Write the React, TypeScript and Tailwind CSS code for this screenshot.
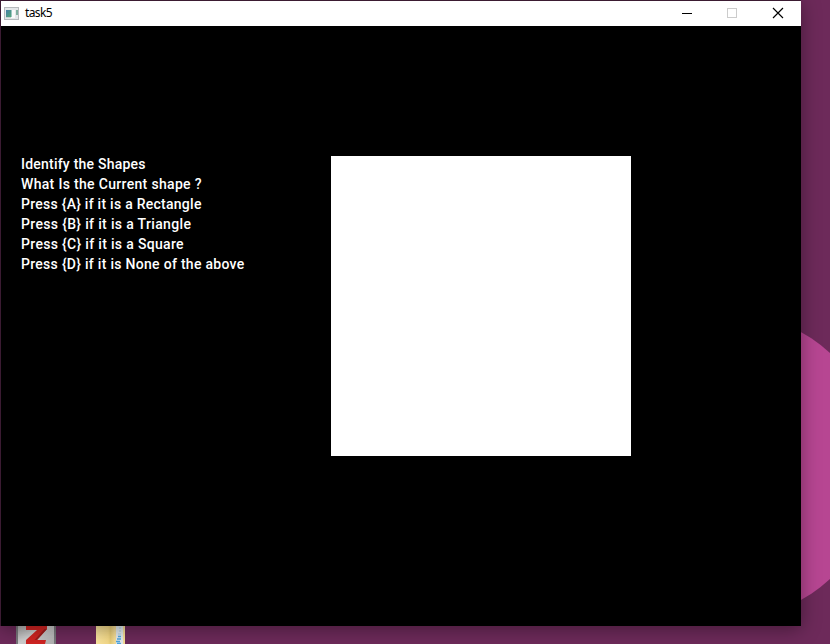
const lines = [
  { text: "Identify the Shapes", tracking: "tracking-[0.22px]" },
  { text: "What Is the Current shape ?", tracking: "tracking-[0.32px]" },
  { text: "Press {A} if it is a Rectangle", tracking: "tracking-[0.26px]" },
  { text: "Press {B} if it is a Triangle", tracking: "tracking-[0.34px]" },
  { text: "Press {C} if it is a Square", tracking: "tracking-[0.33px]" },
  { text: "Press {D} if it is None of the above", tracking: "tracking-[0.29px]" },
];

function Wallpaper() {
  return (
    <svg className="absolute inset-0" width="830" height="644" viewBox="0 0 830 644">
      <circle cx="726" cy="466" r="153.6" fill="#b74692" />
    </svg>
  );
}

function DesktopIcons() {
  return (
    <svg className="absolute left-0 top-[620px]" width="150" height="24" viewBox="0 0 150 24">
      <defs>
        <linearGradient id="tile" x1="0" x2="1" y1="0" y2="1">
          <stop offset="0" stopColor="#a0a0a0" />
          <stop offset="0.5" stopColor="#d0d0d0" />
          <stop offset="1" stopColor="#b0b0b0" />
        </linearGradient>
        <linearGradient id="folder" x1="0" x2="1">
          <stop offset="0" stopColor="#fce6a0" />
          <stop offset="0.42" stopColor="#f5da88" />
          <stop offset="0.5" stopColor="#e8cd78" />
          <stop offset="0.65" stopColor="#f7df98" />
          <stop offset="1" stopColor="#f7df98" />
        </linearGradient>
      </defs>
      <rect x="16" y="0" width="40" height="24" fill="#77777a" />
      <rect x="18" y="0" width="36" height="24" fill="url(#tile)" />
      <path d="M26 3H47V9L37 20H46L45 24H26V20L37 10H26Z" fill="#d02422" />
      <path d="M47 9L37 20H34.5L44.5 9Z" fill="#9c1d1c" />
      <rect x="96" y="0" width="29" height="24" fill="url(#folder)" />
      <rect x="116" y="0" width="7" height="24" fill="#e3ebef" />
      <path d="M119 8H121M119 11H121M118 14H121" stroke="#a9cfe6" />
      <path d="M118 16.5H121M117 19H121M116 21.5H120M117 23.5H121" stroke="#4fa6df" strokeWidth="1.5" />
    </svg>
  );
}

function AppIcon() {
  return (
    <svg width="15" height="13" viewBox="0 0 15 13" shapeRendering="crispEdges">
      <defs>
        <linearGradient id="screen" x1="0" x2="1" y1="0" y2="1">
          <stop offset="0" stopColor="#447fa8" />
          <stop offset="1" stopColor="#55a877" />
        </linearGradient>
      </defs>
      <rect width="15" height="13" fill="#b6babd" />
      <rect x="1" y="1" width="13" height="11" fill="#e4e7e9" />
      <rect x="2" y="3" width="5" height="7" fill="url(#screen)" />
      <rect x="7" y="3" width="4" height="8" fill="#f9fafa" />
      <rect x="7" y="3" width="1" height="7" fill="#9cc5c0" />
      <rect x="12" y="3" width="2" height="5" fill="#7fae9f" />
      <rect x="2" y="10" width="5" height="1" fill="#c5d4d0" />
    </svg>
  );
}

function TitleBar() {
  return (
    <header className="flex h-[25px] items-center bg-white pl-[3px]">
      <AppIcon />
      <span className="ml-[6px] pb-px font-['Noto_Sans',sans-serif] text-[12px] leading-[24px] tracking-[-0.6px] text-black">task5</span>
      <svg className="ml-auto" width="137" height="25" viewBox="0 0 137 25" fill="none">
        <path d="M18 12.5H28" stroke="#000" shapeRendering="crispEdges" />
        <rect x="63.5" y="7.5" width="9" height="9" stroke="#ccc" shapeRendering="crispEdges" />
        <path d="M109 7L119 17M119 7L109 17" stroke="#000" strokeWidth="1.15" />
      </svg>
    </header>
  );
}

export default function App() {
  return (
    <div className="relative h-[644px] w-[830px] overflow-hidden bg-[#6d2a5a]">
      <Wallpaper />
      <DesktopIcons />
      <section className="absolute left-0 top-0 w-[801px] border-l border-t border-[#3b1b32] bg-black shadow-[0_3px_18px_rgba(0,0,0,0.38)]">
        <TitleBar />
        <main className="flex h-[600px] pl-5 pt-[130px]">
          <div className="w-[310px] font-[Roboto,sans-serif] text-[14px] font-medium leading-5 text-white">
            <div className="-mt-0.5">
              {lines.map(({ text, tracking }) => (
                <p key={text} className="whitespace-nowrap">
                  <span className={tracking}>{text}</span>
                </p>
              ))}
            </div>
          </div>
          <div className="size-[300px] bg-white" />
        </main>
      </section>
    </div>
  );
}
